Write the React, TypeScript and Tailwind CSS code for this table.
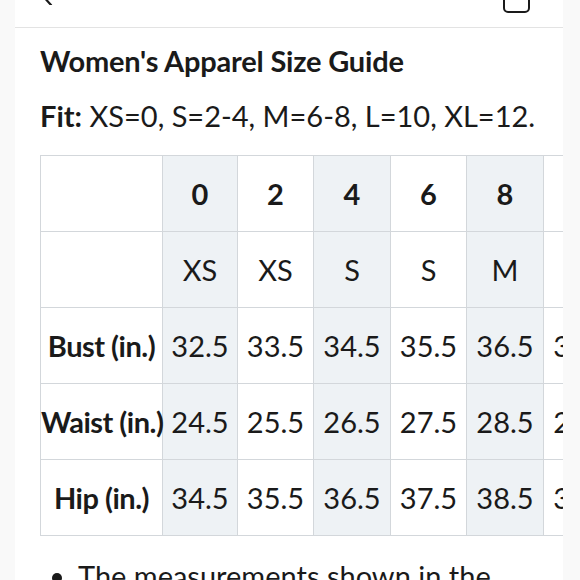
import React from "react";

const sizes = ["0", "2", "4", "6", "8", "10"];
const labels = ["XS", "XS", "S", "S", "M", "L"];
const rows: { label: string; values: string[] }[] = [
  { label: "Bust (in.)", values: ["32.5", "33.5", "34.5", "35.5", "36.5", "37.5"] },
  { label: "Waist (in.)", values: ["24.5", "25.5", "26.5", "27.5", "28.5", "29.5"] },
  { label: "Hip (in.)", values: ["34.5", "35.5", "36.5", "37.5", "38.5", "39.5"] },
];
const shaded = (i: number) => i === 0 || i === 2 || i === 4;

export default function App() {
  return (
    <div
      className="w-[580px] h-[580px] overflow-hidden bg-[#f9f9f9] text-[#1a1a1a]"
      style={{ fontFamily: "Lato, 'Open Sans', sans-serif" }}
    >
      <div className="mx-[15px] w-[548px] h-[580px] bg-white overflow-hidden">
        <div className="-mt-[30px] h-[58px] border-b border-[#e3e3e3] flex items-start justify-between pl-[24px] pr-[33px]">
          <svg className="mt-[13px]" width="16" height="22" viewBox="0 0 16 22" fill="none">
            <polyline points="12,2 3,12 12,22" stroke="#1a1a1a" strokeWidth="2.2" strokeLinecap="round" strokeLinejoin="round" />
          </svg>
          <div className="mt-[17px] w-[27px] h-[26px] border-[2.5px] border-[#1a1a1a] rounded-[5px]" />
        </div>
        <div className="pl-[25px]">
          <h1 className="mt-[15px] text-[29px] leading-[36px] font-bold tracking-[-0.2px]">Women's Apparel Size Guide</h1>
          <p className="mt-[19px] text-[29px] leading-[36px]">
            <span className="font-bold">Fit:</span> XS=0, S=2-4, M=6-8, L=10, XL=12.
          </p>
          <div className="mt-[21px] overflow-hidden w-[523px]">
            <table className="border-collapse table-fixed w-[580px] text-[29px]">
              <colgroup>
                <col className="w-[122px]" />
                <col className="w-[75px]" />
                <col className="w-[76px]" />
                <col className="w-[77px]" />
                <col className="w-[76px]" />
                <col className="w-[77px]" />
                <col className="w-[77px]" />
              </colgroup>
              <tbody>
                <tr className="h-[76px]">
                  <td className="border-[1.5px] border-[#d3d7db]" />
                  {sizes.map((s, i) => (
                    <td
                      key={s}
                      className={`border-[1.5px] border-[#d3d7db] text-center font-bold ${shaded(i) ? "bg-[#eef2f5]" : "bg-white"}`}
                    >
                      {s}
                    </td>
                  ))}
                </tr>
                <tr className="h-[76px]">
                  <td className="border-[1.5px] border-[#d3d7db]" />
                  {labels.map((s, i) => (
                    <td
                      key={i}
                      className={`border-[1.5px] border-[#d3d7db] text-center ${shaded(i) ? "bg-[#eef2f5]" : "bg-white"}`}
                    >
                      {s}
                    </td>
                  ))}
                </tr>
                {rows.map((r) => (
                  <tr key={r.label} className="h-[76px]">
                    <td className="border-[1.5px] border-[#d3d7db] text-center font-bold whitespace-nowrap tracking-[-0.5px]">
                      {r.label}
                    </td>
                    {r.values.map((v, i) => (
                      <td
                        key={i}
                        className={`border-[1.5px] border-[#d3d7db] text-center whitespace-nowrap ${shaded(i) ? "bg-[#eef2f5]" : "bg-white"}`}
                      >
                        {v}
                      </td>
                    ))}
                  </tr>
                ))}
              </tbody>
            </table>
          </div>
          <ul className="mt-[22px] pl-[38px] list-disc text-[29px] leading-[36px]">
            <li>The measurements shown in the</li>
          </ul>
        </div>
      </div>
    </div>
  );
}
